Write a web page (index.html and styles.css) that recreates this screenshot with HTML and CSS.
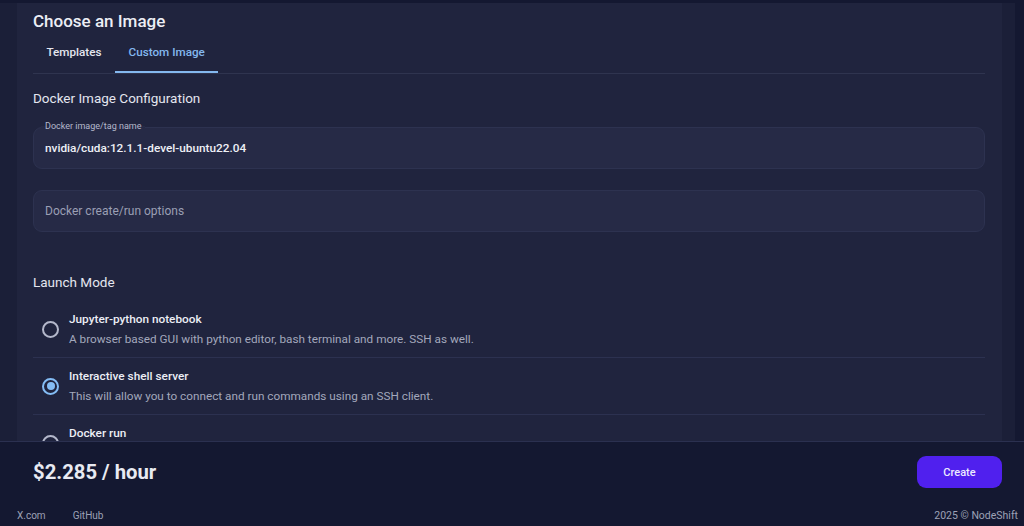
FILE: index.html
```html
<!DOCTYPE html>
<html>
<head>
<meta charset="utf-8">
<link rel="stylesheet" href="styles.css">
</head>
<body>
<div class="app">
  <div class="main">
    <div class="scroll">
      <div class="card">
        <h1 class="title">Choose an Image</h1>
        <div class="tabs">
          <div class="tab">Templates</div>
          <div class="tab active">Custom Image</div>
        </div>
        <h2 class="section">Docker Image Configuration</h2>
        <div class="field">
          <span class="field-label">Docker image/tag name</span>
          <span class="field-value">nvidia/cuda:12.1.1-devel-ubuntu22.04</span>
        </div>
        <div class="field">
          <span class="field-placeholder">Docker create/run options</span>
        </div>
        <h2 class="section launch">Launch Mode</h2>
        <div class="options">
          <div class="option">
            <span class="radio"></span>
            <div class="option-text">
              <div class="option-title">Jupyter-python notebook</div>
              <div class="option-desc">A browser based GUI with python editor, bash terminal and more. SSH as well.</div>
            </div>
          </div>
          <div class="option">
            <span class="radio checked"></span>
            <div class="option-text">
              <div class="option-title">Interactive shell server</div>
              <div class="option-desc">This will allow you to connect and run commands using an SSH client.</div>
            </div>
          </div>
          <div class="option">
            <span class="radio"></span>
            <div class="option-text">
              <div class="option-title">Docker run</div>
              <div class="option-desc">Run a docker container with the given image and options.</div>
            </div>
          </div>
        </div>
      </div>
    </div>
  </div>
  <div class="bottom">
    <div class="bar">
      <div class="price">$2.285 / hour</div>
      <button class="create">Create</button>
    </div>
    <div class="footer">
      <div class="links"><span>X.com</span><span>GitHub</span></div>
      <div class="copy">2025 © NodeShift</div>
    </div>
  </div>
</div>
</body>
</html>
```
FILE: styles.css
```css
* { box-sizing: border-box; }
html, body { margin: 0; padding: 0; }
body {
  background: #141831;
  font-family: Roboto, "Liberation Sans", sans-serif;
  color: #e4e6ef;
  width: 1024px;
  height: 526px;
  overflow: hidden;
}
.app { display: flex; flex-direction: column; height: 526px; }
.main {
  height: 441px;
  padding-top: 3px;
  display: flex;
  overflow: hidden;
}
.scroll {
  width: 1015px;
  background: #1b1f38;
  padding-left: 17px;
  overflow: hidden;
}
.card {
  width: 985px;
  background: #20243e;
  padding: 6px 17px 0 16px;
  min-height: 600px;
}
.title {
  margin: 0;
  font-size: 17px;
  font-weight: 500;
  line-height: 24px;
  color: #eceef5;
}
.tabs {
  display: flex;
  height: 41px;
  margin-top: 0;
  border-bottom: 1px solid #2f344f;
}
.tab {
  padding: 0 13.5px;
  font-size: 11.7px;
  font-weight: 500;
  line-height: 38px;
  color: #e4e6ef;
  border-bottom: 2px solid transparent;
}
.tab.active {
  color: #84b8ef;
  border-bottom-color: #84b8ef;
}
.section {
  margin: 0;
  font-size: 13.5px;
  font-weight: 400;
  line-height: 20px;
  color: #e4e6ef;
  padding-top: 14px;
}
.field {
  position: relative;
  height: 42px;
  margin-top: 19px;
  background: #262a46;
  border: 1px solid #2d3250;
  border-radius: 9px;
  display: flex;
  align-items: center;
  padding: 0 11px;
}
.field + .field { margin-top: 21px; }
.field-label {
  position: absolute;
  left: 7px;
  top: -8px;
  padding: 0 4px;
  font-size: 9px;
  line-height: 12px;
  color: #b4b8cb;
  background: linear-gradient(to bottom, #20243e 50%, #262a46 50%);
}
.field-value {
  font-size: 11.8px;
  font-weight: 500;
  color: #eef0f6;
}
.field-placeholder {
  font-size: 12px;
  color: #9a9fb4;
}
.section.launch { padding-top: 40px; }
.options { margin-top: 9px; }
.option {
  display: flex;
  align-items: center;
  height: 57px;
  border-bottom: 1px solid #2c3150;
}
.radio {
  width: 17px;
  height: 17px;
  border: 2px solid #b4b8cb;
  border-radius: 50%;
  margin: 0 10px 0 9px;
  flex: none;
  position: relative;
}
.radio.checked { border-color: #84bdf5; }
.radio.checked::after {
  content: "";
  position: absolute;
  left: 2.5px;
  top: 2.5px;
  width: 8px;
  height: 8px;
  border-radius: 50%;
  background: #84bdf5;
}
.option-title {
  font-size: 11.8px;
  font-weight: 500;
  line-height: 16px;
  color: #eceef5;
}
.option-desc {
  margin-top: 4px;
  font-size: 11.75px;
  line-height: 16px;
  color: #a3a8bc;
}
.bottom {
  flex: 1;
  background: #141831;
  border-top: 1px solid #2b3050;
}
.bar {
  display: flex;
  align-items: center;
  justify-content: space-between;
  padding: 14px 22px 0 33px;
  height: 46px;
}
.price {
  font-size: 20.3px;
  font-weight: 700;
  color: #e8eaf2;
}
.create {
  width: 85px;
  height: 32px;
  border: none;
  border-radius: 9px;
  background: #5020ee;
  color: #ecebff;
  font-family: Roboto, "Liberation Sans", sans-serif;
  font-size: 11px;
  font-weight: 500;
}
.footer {
  display: flex;
  justify-content: space-between;
  padding: 21px 6px 0 17px;
  font-size: 10px;
  line-height: 14px;
  color: #9da1b6;
}
.links { display: flex; gap: 27px; }
.copy { font-size: 10.5px; }
```
